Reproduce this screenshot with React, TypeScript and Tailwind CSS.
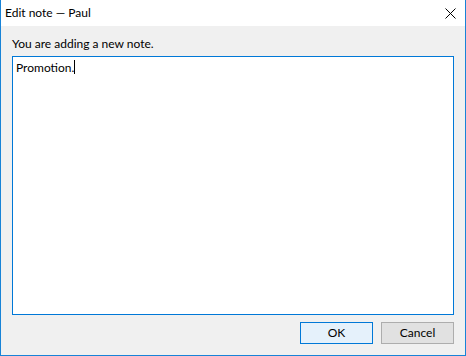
import React from "react";

export default function App() {
  return (
    <div
      className="w-[466px] h-[356px] flex flex-col border-l border-r border-b border-[#1883d7] bg-[#f0f0f0] text-[12px] text-black"
      style={{ fontFamily: 'Lato, "Noto Sans", sans-serif' }}
    >
      <div className="h-[26px] bg-white flex items-center justify-between pl-[4px] shrink-0">
        <span className="leading-none">Edit note — Paul</span>
        <div className="w-[30px] h-[26px] flex items-center justify-center mr-[0px]">
          <svg width="11" height="11" viewBox="0 0 11 11">
            <path d="M0.5 0.5 L10.5 10.5 M10.5 0.5 L0.5 10.5" stroke="#000" strokeWidth="1" />
          </svg>
        </div>
      </div>
      <div className="flex-1 flex flex-col px-[11px] pt-[9px] pb-[11px]">
        <div className="h-[18px] leading-[18px]">You are adding a new note.</div>
        <div className="mt-[3px] h-[259px] bg-white border border-[#0078d7] px-[3px] py-[3px] leading-[16px]">
          Promotion.<span className="inline-block w-px h-[14px] bg-black align-[-2px]" />
        </div>
        <div className="mt-[7px] flex justify-end gap-[8px]">
          <button className="w-[73px] h-[22px] bg-[#e5f1fb] border border-[#0078d7] leading-none">OK</button>
          <button className="w-[73px] h-[22px] bg-[#e1e1e1] border border-[#adadad] leading-none">Cancel</button>
        </div>
      </div>
    </div>
  );
}
